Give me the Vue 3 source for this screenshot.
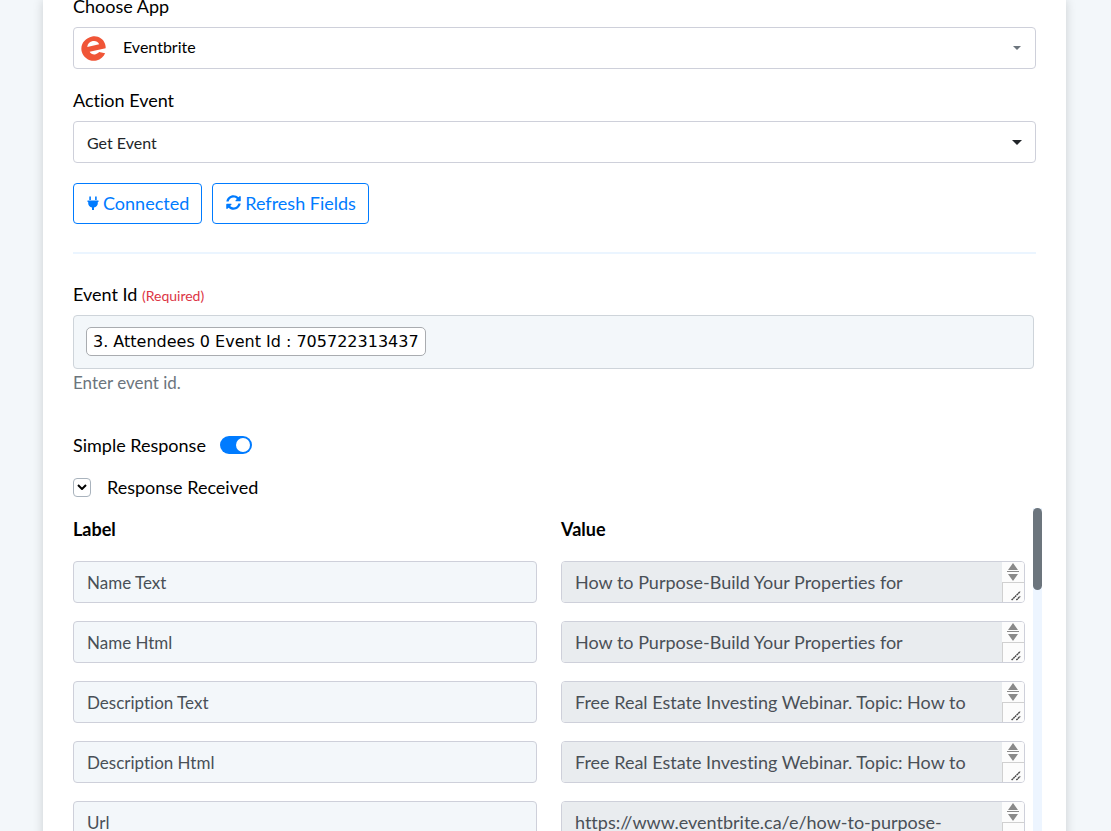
<script setup>
import { ref } from 'vue'

const simple = ref(true)
const open = ref(true)
const description =
  'Free Real Estate Investing Webinar. Topic: How to\nPurpose-Build Your Properties for Maximum Profit'
const fields = ref([
  { label: 'Name Text', value: 'How to Purpose-Build Your Properties for\nMaximum Profit' },
  { label: 'Name Html', value: 'How to Purpose-Build Your Properties for\nMaximum Profit' },
  { label: 'Description Text', value: description },
  { label: 'Description Html', value: description },
  { label: 'Url', value: 'https://www.eventbrite.ca/e/how-to-purpose-' }
])
</script>

<template>
  <div class="page">
    <main class="card">
      <label class="label" for="app-select">Choose App</label>
      <div class="select-wrap">
        <svg class="logo" viewBox="0 0 26 26" aria-hidden="true">
          <path
            fill="#f05537"
            d="M11.600.600C17.300-.700 23.300 2.700 25.100 8.500c.5 1.500.6 2.900.5 4.200L9 16.500c1.300 2.300 3.900 3.100 6.200 2.500 1.600-.4 2.800-1.300 3.600-2.300l6.300 1.200c-1.600 3.600-4.700 6.600-8.900 7.500C9.500 26.900 2.700 23 .8 16.300-1.200 9.200 3.800 2.300 11.600.600zM6.500 11.400l12.400-2.900c-1.300-2.800-4-3.800-6.700-3.200-3.100.700-5.400 2.900-5.700 6.100z"
          />
        </svg>
        <select id="app-select" class="control with-logo">
          <option>Eventbrite</option>
        </select>
        <svg class="caret small" viewBox="0 0 8 4" aria-hidden="true"><path d="M0 0h8L4 4z" /></svg>
      </div>

      <label class="label" for="event-select">Action Event</label>
      <div class="select-wrap">
        <select id="event-select" class="control">
          <option>Get Event</option>
        </select>
        <svg class="caret" viewBox="0 0 10 5" aria-hidden="true"><path d="M0 0h10L5 5z" /></svg>
      </div>

      <div class="actions">
        <button type="button" class="btn">
          <svg class="plug" viewBox="0 0 12 16" aria-hidden="true">
            <path d="M2.300 1.500h1.600V5H2.300zM8.100 1.500h1.600V5H8.100zM.5 5.500h11V7h-.7v1.200c0 2.200-1.500 3.900-3.800 4.300V15H5v-2.500C2.700 12.100 1.200 10.400 1.200 8.200V7H.5z" />
          </svg>
          Connected
        </button>
        <button type="button" class="btn">
          <svg class="refresh" viewBox="0 0 512 512" aria-hidden="true">
            <path d="M370.720 133.280C339.458 104.008 298.888 87.962 255.848 88c-77.458.068-144.328 53.178-162.791 126.850-1.344 5.363-6.122 9.150-11.651 9.150H24.103c-7.498 0-13.194-6.807-11.807-14.176C33.933 94.924 134.813 8 256 8c66.448 0 126.791 26.136 171.315 68.685L463.030 40.970C478.149 25.851 504 36.559 504 57.941V192c0 13.255-10.745 24-24 24H345.941c-21.382 0-32.090-25.851-16.971-40.971l41.750-41.749zM32 296h134.059c21.382 0 32.090 25.851 16.971 40.971l-41.750 41.750c31.262 29.273 71.835 45.319 114.876 45.280 77.418-.070 144.315-53.144 162.787-126.849 1.344-5.363 6.122-9.150 11.651-9.150h57.304c7.498 0 13.194 6.807 11.807 14.176C478.067 417.076 377.187 504 256 504c-66.448 0-126.791-26.136-171.315-68.685L48.970 471.030C33.851 486.149 8 475.441 8 454.059V320c0-13.255 10.745-24 24-24z" />
          </svg>
          Refresh Fields
        </button>
      </div>

      <hr class="rule" />

      <div class="label">Event Id <span class="required">(Required)</span></div>
      <div class="token-box"><span class="token">3. Attendees 0 Event Id : 705722313437</span></div>
      <p class="hint">Enter event id.</p>

      <div class="line">
        <label for="simple">Simple Response</label>
        <input id="simple" v-model="simple" class="switch" type="checkbox" role="switch" />
      </div>
      <div class="line received">
        <button type="button" class="toggle" aria-label="Toggle response" @click="open = !open">
          <svg viewBox="0 0 10 6" aria-hidden="true"><path d="M1 1l4 4 4-4" /></svg>
        </button>
        <span>Response Received</span>
      </div>

      <section v-if="open" class="response">
        <div class="fields">
          <div class="row head"><span>Label</span><span>Value</span></div>
          <div v-for="(f, i) in fields" :key="i" class="row">
            <input v-model="f.label" class="name" type="text" :aria-label="'Label ' + (i + 1)" />
            <div class="value">
              <textarea v-model="f.value" readonly :aria-label="f.label"></textarea>
              <div class="side" aria-hidden="true">
                <svg class="arrows" viewBox="0 0 22 20">
                  <path d="M11 1l5 7H6zM6 12h10l-5 7z" fill="#8a8a8a" />
                  <path d="M5 9.500h12" stroke="#8a8a8a" />
                </svg>
                <svg class="grip" viewBox="0 0 20 20">
                  <path d="M8 18l9-9M13 18l4-4" stroke="#444" stroke-width="1.500" stroke-dasharray="2 .5" />
                </svg>
              </div>
            </div>
          </div>
        </div>
        <div class="track"><div class="thumb"></div></div>
      </section>
    </main>
  </div>
</template>

<style>
body {
  margin: 0;
  background: #f3f7fa;
}
</style>

<style scoped>
.page {
  box-sizing: border-box;
  height: 100vh;
  overflow: hidden;
  padding: 0 45px 0 43px;
  font-family: Lato, "Noto Sans", sans-serif;
  font-size: 18px;
  font-variant-ligatures: none;
  line-height: 24px;
  color: #000;
}
.card {
  box-sizing: border-box;
  min-height: 100%;
  padding: 0 30px;
  background: #fff;
  box-shadow: 0 0 10px rgba(0, 0, 0, 0.16);
  overflow: hidden;
}
.page * {
  box-sizing: border-box;
}
.label {
  display: block;
  height: 33px;
}
.label:first-child {
  margin-top: -6px;
}
.select-wrap {
  position: relative;
  margin-bottom: 19px;
}
.control {
  display: block;
  width: 100%;
  height: 42px;
  padding: 2px 40px 0 13px;
  border: 1px solid #ced0da;
  border-radius: 4px;
  appearance: none;
  background: #fff;
  font: inherit;
  font-size: 16px;
  color: #212529;
}
.with-logo {
  padding-top: 0;
  padding-bottom: 2px;
  padding-left: 49px;
  color: #000;
}
.logo {
  position: absolute;
  left: 8px;
  top: 9px;
  width: 25px;
  height: 25px;
}
.caret {
  position: absolute;
  right: 14px;
  top: 19px;
  width: 10px;
  height: 5px;
  fill: #212529;
}
.caret.small {
  right: 15px;
  width: 8px;
  height: 4px;
  fill: #6c757d;
}
.actions {
  display: flex;
  gap: 10px;
  padding-top: 1px;
}
.btn {
  display: flex;
  align-items: center;
  gap: 4px;
  height: 41px;
  padding: 0 12px 2px 13px;
  border: 1px solid #007bff;
  border-radius: 4px;
  background: #fff;
  font: inherit;
  color: #007bff;
}
.btn svg {
  fill: #007bff;
}
.plug {
  width: 12px;
  height: 16px;
}
.refresh {
  width: 15px;
  height: 15px;
}
.rule {
  height: 2px;
  margin: 28px 0;
  border: 0;
  background: #ebf5ff;
}
.required {
  font-size: 14px;
  color: #dc3545;
}
.token-box {
  height: 54px;
  margin-right: 2px;
  padding: 11px 12px;
  border: 1px solid #ced4da;
  border-radius: 4px;
  background: #f3f7fa;
}
.token {
  display: inline-block;
  height: 29px;
  padding: 0 6px;
  border: 1px solid #a9acb0;
  border-radius: 5px;
  background: #fff;
  font-family: "DejaVu Sans", sans-serif;
  font-size: 16px;
  line-height: 28px;
  white-space: nowrap;
}
.hint {
  margin: 2px 0 38px;
  font-size: 17px;
  color: #6c757d;
}
.line {
  display: flex;
  align-items: center;
  gap: 14px;
}
.received {
  gap: 16px;
  margin-top: 18px;
}
.switch {
  width: 32px;
  height: 18px;
  margin: 0;
  border-radius: 9px;
  appearance: none;
  background: #adb5bd;
}
.switch::before {
  content: "";
  display: block;
  width: 14px;
  height: 14px;
  margin: 2px;
  border-radius: 50%;
  background: #fff;
}
.switch:checked {
  background: #007bff;
}
.switch:checked::before {
  margin-left: 16px;
}
.toggle {
  display: flex;
  align-items: center;
  justify-content: center;
  width: 18px;
  height: 19px;
  padding: 0;
  border: 1px solid #a9b3bd;
  border-radius: 4px;
  background: #fff;
}
.toggle svg {
  width: 10px;
  height: 6px;
  fill: none;
  stroke: #000;
  stroke-width: 2;
}
.response {
  display: flex;
  gap: 8px;
  margin: 9px -6px 0 0;
}
.fields {
  flex: 1;
  display: grid;
  gap: 18px;
}
.row {
  display: grid;
  grid-template-columns: 1fr 1fr;
  gap: 24px;
  height: 42px;
}
.head {
  height: 35px;
  padding-top: 9px;
  font-weight: 700;
}
.name {
  width: 100%;
  height: 42px;
  padding: 0 13px;
  border: 1px solid #ced0da;
  border-radius: 4px;
  background: #f3f7fa;
  font: inherit;
  font-size: 17px;
  color: #495057;
}
.value {
  display: flex;
  height: 42px;
  border: 1px solid #ced0da;
  border-radius: 4px;
  overflow: hidden;
}
.value textarea {
  flex: 1;
  min-width: 0;
  height: 40px;
  padding: 7px 0 0 13px;
  border: 0;
  resize: none;
  overflow: hidden;
  background: #e9ecef;
  font: inherit;
  line-height: 27px;
  white-space: pre;
  color: #495057;
}
.side {
  width: 22px;
  background: #fcfcfc;
}
.side svg {
  display: block;
  width: 22px;
  height: 20px;
  fill: none;
}
.side .grip {
  border-top: 1px solid #d0d0d0;
  border-left: 1px solid #d0d0d0;
}
.track {
  width: 9px;
  background: #edf5ff;
}
.thumb {
  height: 82px;
  border-radius: 5px;
  background: #6c757d;
}
</style>
